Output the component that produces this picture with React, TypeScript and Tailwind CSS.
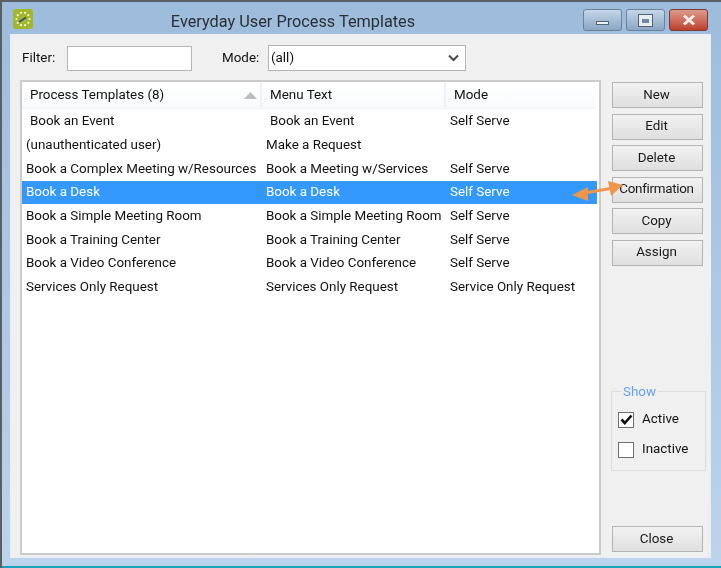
import { useState } from "react";

const rows = [
  { name: "Book an Event", menu: "Book an Event", mode: "Self Serve", indent: true },
  { name: "(unauthenticated user)", menu: "Make a Request", mode: "" },
  { name: "Book a Complex Meeting w/Resources", menu: "Book a Meeting w/Services", mode: "Self Serve" },
  { name: "Book a Desk", menu: "Book a Desk", mode: "Self Serve", selected: true },
  { name: "Book a Simple Meeting Room", menu: "Book a Simple Meeting Room", mode: "Self Serve" },
  { name: "Book a Training Center", menu: "Book a Training Center", mode: "Self Serve" },
  { name: "Book a Video Conference", menu: "Book a Video Conference", mode: "Self Serve" },
  { name: "Services Only Request", menu: "Services Only Request", mode: "Service Only Request" },
];

function WinButton({ label, className = "" }: { label: string; className?: string }) {
  return (
    <button className={`w-[91px] h-[26px] shrink-0 pr-[2px] border border-[#b4b4b4] bg-gradient-to-b from-[#f2f2f2] to-[#dfdfdf] text-[#1a1a1a] ${className}`}>
      {label}
    </button>
  );
}

function Logo() {
  const dots = Array.from({ length: 10 }, (_, i) => {
    const a = (i * Math.PI) / 5;
    return <circle key={i} cx={10 + 6.5 * Math.cos(a)} cy={10 + 6.5 * Math.sin(a)} r={1.1} fill="#f4f7d8" />;
  });
  return (
    <svg width="20" height="20" viewBox="0 0 20 20" className="shrink-0">
      <rect width="20" height="20" rx="2.5" fill="#a3b72c" />
      {dots}
      <path d="M6 13 L13 8.5" stroke="#25507e" strokeWidth="1.6" />
    </svg>
  );
}

export default function App() {
  const [active, setActive] = useState(true);
  const [inactive, setInactive] = useState(false);

  return (
    <div className="relative w-[721px] h-[568px] overflow-hidden border-t-2 border-l-2 border-[#5a5f63] bg-gradient-to-b from-[#9dbcdc] to-[#bcd4ec] font-['Roboto',sans-serif] text-[13.4px] text-[#111111] flex flex-col blur-[0.3px]">
      {/* title bar */}
      <div className="h-[32px] shrink-0 flex items-start pl-[11px] pr-[13px] pt-[7px]">
        <Logo />
        <div className="flex-1 text-center text-[16.3px] leading-[24px] pt-[1px] pr-[30px] text-[#2b2f33]">Everyday User Process Templates</div>
        <div className="flex gap-[4px]">
          <div className="w-[39px] h-[22px] rounded-[3px] border border-[#6d8197] bg-gradient-to-b from-[#c5d7e9] to-[#8aa7c3] flex items-center justify-center">
            <div className="w-[13px] h-[4px] mt-[5px] bg-[#eef1f3] border border-[#56636f]" />
          </div>
          <div className="w-[39px] h-[22px] rounded-[3px] border border-[#6d8197] bg-gradient-to-b from-[#c5d7e9] to-[#8aa7c3] flex items-center justify-center">
            <div className="w-[13px] h-[11px] border-[3px] border-t-[4px] border-[#e8ecef] bg-[#6f8aa5] outline outline-1 outline-[#56636f]" />
          </div>
          <div className="w-[39px] h-[22px] rounded-[3px] border border-[#7e3b34] bg-gradient-to-b from-[#dd9a8c] to-[#bd3e2c] flex items-center justify-center">
            <svg width="14" height="12" viewBox="0 0 14 12">
              <path d="M2 1.5 L12 10.5 M12 1.5 L2 10.5" stroke="#f3ece8" strokeWidth="3" />
            </svg>
          </div>
        </div>
      </div>

      {/* client area */}
      <div className="ml-[8px] mr-[10px] mb-[10px] flex-1 bg-[#f0f0f0] border border-[#e8eef4] px-[9px] pt-[10px] pb-[3px] flex flex-col min-h-0">
        <div className="flex items-center h-[26px] shrink-0">
          <label className="w-[47px] pl-[2px]">Filter:</label>
          <input className="w-[125px] h-[25px] bg-white border border-[#b5b5b5] outline-none" />
          <label className="ml-[30px] w-[46px]">Mode:</label>
          <div className="w-[198px] h-[26px] bg-white border border-[#b5b5b5] flex items-center justify-between pl-[2px] pr-[6px]">
            <span>(all)</span>
            <svg width="11" height="8" viewBox="0 0 11 8">
              <path d="M1 1.5 L5.5 6 L10 1.5" fill="none" stroke="#4a4a4a" strokeWidth="2" />
            </svg>
          </div>
        </div>

        <div className="flex flex-1 mt-[9px] min-h-0">
          {/* list */}
          <div className="w-[581px] h-[475px] shrink-0 border-2 border-[#cbcbcb] bg-white flex flex-col">
            <div className="flex h-[27px] shrink-0 mr-[3px] border-b border-[#eef3f9] bg-gradient-to-b from-white to-[#f8fafc]">
              <div className="w-[240px] border-r-2 border-[#edf2f8] pl-[8px] flex items-center justify-between pr-[2px]">
                <span>Process Templates (8)</span>
                <svg width="13" height="7" viewBox="0 0 13 7" className="mr-[1px]">
                  <path d="M6.5 0 L13 7 L0 7 Z" fill="#b9bec4" />
                </svg>
              </div>
              <div className="w-[184px] border-r-2 border-[#edf2f8] pl-[8px] flex items-center">Menu Text</div>
              <div className="flex-1 pl-[8px] flex items-center">Mode</div>
            </div>
            <div className="mr-[2px] mt-[0.5px]">
              {rows.map((r) => (
                <div
                  key={r.name}
                  className={`flex h-[23.7px] items-center ${r.selected ? "bg-[#3399ff] text-white" : ""}`}
                >
                  <div className={`w-[240px] whitespace-nowrap ${r.indent ? "pl-[8px]" : "pl-[4px]"}`}>{r.name}</div>
                  <div className={`w-[184px] whitespace-nowrap ${r.indent ? "pl-[8px]" : "pl-[4px]"}`}>{r.menu}</div>
                  <div className="flex-1 pl-[4px] whitespace-nowrap">{r.mode}</div>
                </div>
              ))}
            </div>
          </div>

          {/* right column */}
          <div className="ml-[11px] flex-1 flex flex-col pt-[2px]">
            <div className="flex flex-col gap-[5.5px]">
              <WinButton label="New" />
              <WinButton label="Edit" />
              <WinButton label="Delete" />
              <WinButton label="Confirmation" className="tracking-[-0.3px]" />
              <WinButton label="Copy" />
              <WinButton label="Assign" />
            </div>
            <fieldset className="mt-[118px] -ml-[1px] w-[95px] h-[87px] border border-[#dcdcdc] px-[6px]">
              <legend className="ml-[3px] px-[2px] text-[#66a3e8] leading-[16px]">Show</legend>
              <label className="flex items-center gap-[8px] h-[30px] mt-[5px]">
                <input type="checkbox" className="sr-only" checked={active} onChange={(e) => setActive(e.target.checked)} />
                <span className="w-[16px] h-[16px] border border-[#6e6e6e] bg-white flex items-center justify-center">
                  {active && (
                    <svg width="13" height="11" viewBox="0 0 13 11">
                      <path d="M1.5 5.5 L4.8 9 L11.5 1.5" fill="none" stroke="#111" strokeWidth="2.6" />
                    </svg>
                  )}
                </span>
                Active
              </label>
              <label className="flex items-center gap-[8px] h-[30px]">
                <input type="checkbox" className="sr-only" checked={inactive} onChange={(e) => setInactive(e.target.checked)} />
                <span className="w-[16px] h-[16px] border border-[#6e6e6e] bg-white flex items-center justify-center">
                  {inactive && (
                    <svg width="13" height="11" viewBox="0 0 13 11">
                      <path d="M1.5 5.5 L4.8 9 L11.5 1.5" fill="none" stroke="#111" strokeWidth="2.6" />
                    </svg>
                  )}
                </span>
                Inactive
              </label>
            </fieldset>
            <WinButton label="Close" className="mt-auto mb-[2px]" />
          </div>
        </div>
      </div>

      {/* annotation arrow over the list */}
      <svg width="70" height="32" viewBox="0 0 70 32" className="absolute left-[566px] top-[172px]">
        <path d="M17 19 L45 14" stroke="#f0964a" strokeWidth="3" />
        <path d="M4 21 L20 13 L20 27 Z" fill="#f0964a" />
        <path d="M55 11 L40 7 L43 22 Z" fill="#f0964a" />
      </svg>

      <div className="absolute left-0 right-0 bottom-0 h-[2px] bg-[#1aa0b8]" />
    </div>
  );
}
